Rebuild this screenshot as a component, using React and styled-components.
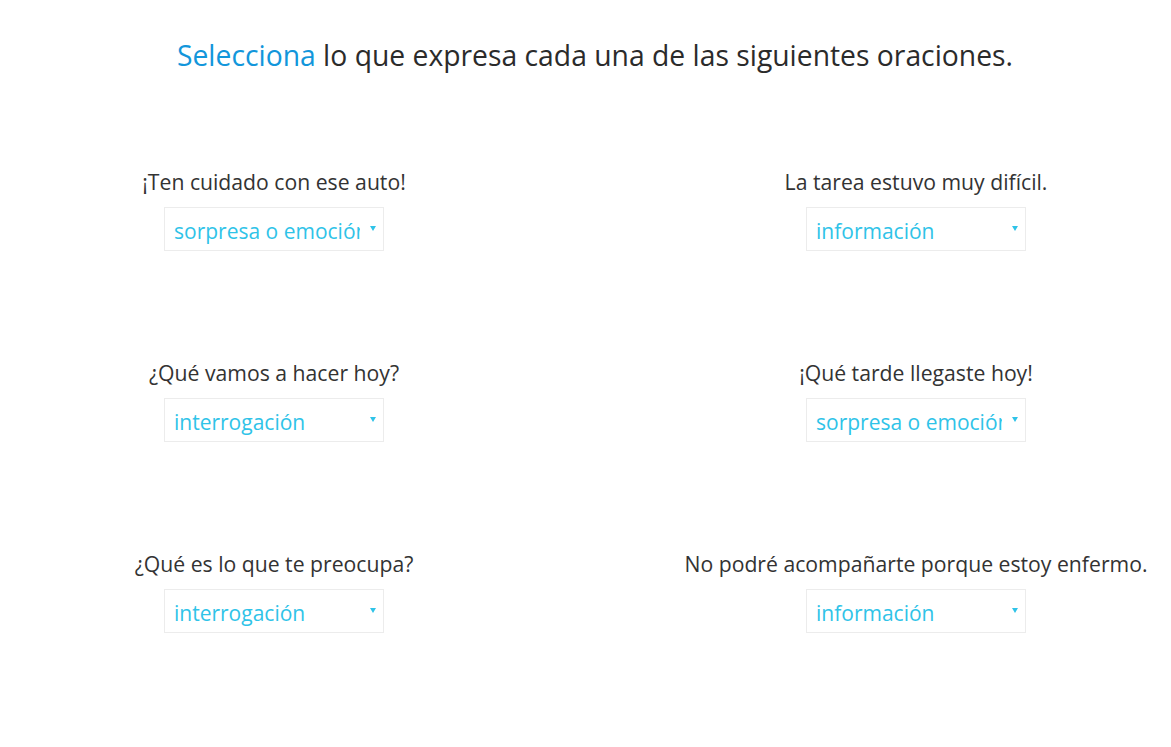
import styled, { createGlobalStyle } from "styled-components";

const GlobalStyle = createGlobalStyle`
  html, body {
    margin: 0;
    padding: 0;
    background: #ffffff;
  }
  body {
    font-family: "Open Sans", "Noto Sans", sans-serif;
    color: #333333;
  }
`;

const items = [
  { text: "¡Ten cuidado con ese auto!", answer: "sorpresa o emoción" },
  { text: "La tarea estuvo muy difícil.", answer: "información" },
  { text: "¿Qué vamos a hacer hoy?", answer: "interrogación" },
  { text: "¡Qué tarde llegaste hoy!", answer: "sorpresa o emoción" },
  { text: "¿Qué es lo que te preocupa?", answer: "interrogación" },
  { text: "No podré acompañarte porque estoy enfermo.", answer: "información" },
];

const Page = styled.div`
  width: 1171px;
  height: 747px;
  box-sizing: border-box;
  padding-top: 36px;
`;

const Title = styled.h1`
  margin: 0;
  padding-left: 19px;
  text-align: center;
  font-size: 28.3px;
  font-weight: 400;
  line-height: 38px;
  color: #2b2b2b;
`;

const Highlight = styled.span`
  color: #1296db;
`;

const Grid = styled.div`
  display: grid;
  grid-template-columns: 500px 500px;
  column-gap: 142px;
  row-gap: 108px;
  padding-left: 24px;
  margin-top: 94px;
`;

const Item = styled.div`
  display: flex;
  flex-direction: column;
  align-items: center;
  gap: 11px;
`;

const Sentence = styled.div`
  font-size: 21.2px;
  line-height: 28px;
  color: #333333;
  white-space: nowrap;
`;

const Dropdown = styled.div`
  position: relative;
  box-sizing: border-box;
  width: 220px;
  height: 44px;
  border: 1px solid #ececec;
  background: #ffffff;
  padding: 0 23px 0 9px;
  display: flex;
  align-items: center;
  overflow: hidden;
`;

const Value = styled.span`
  font-size: 21px;
  color: #2fc3e8;
  white-space: nowrap;
  overflow: hidden;
  padding-top: 3px;
`;

const Caret = styled.span`
  position: absolute;
  right: 7px;
  top: 18px;
  width: 0;
  height: 0;
  border-left: 3px solid transparent;
  border-right: 3px solid transparent;
  border-top: 5px solid #2fc3e8;
`;

export default function App() {
  return (
    <>
      <GlobalStyle />
      <Page>
        <Title>
          <Highlight>Selecciona</Highlight> lo que expresa cada una de las siguientes oraciones.
        </Title>
        <Grid>
          {items.map((item) => (
            <Item key={item.text}>
              <Sentence>{item.text}</Sentence>
              <Dropdown>
                <Value>{item.answer}</Value>
                <Caret />
              </Dropdown>
            </Item>
          ))}
        </Grid>
      </Page>
    </>
  );
}
